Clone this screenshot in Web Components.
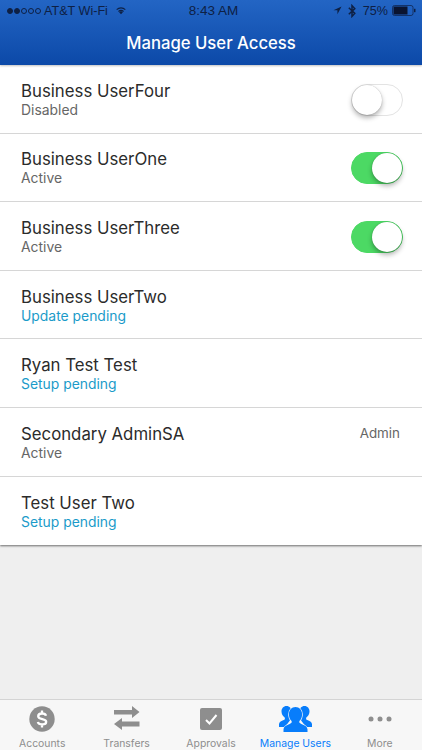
<!DOCTYPE html>
<html>
<head>
<meta charset="utf-8">
<title>Manage User Access</title>
<style>
  html, body { margin: 0; padding: 0; height: 100%; }
  body {
    width: 422px;
    height: 750px;
    overflow: hidden;
    display: flex;
    flex-direction: column;
    background: #efefef;
    font-family: "Inter", "Liberation Sans", sans-serif;
  }
  user-list { flex: 1; }
</style>
</head>
<body>
  <app-header title="Manage User Access"></app-header>
  <user-list>
    <user-row name="Business UserFour" status="Disabled" toggle="off"></user-row>
    <user-row name="Business UserOne" status="Active" toggle="on"></user-row>
    <user-row name="Business UserThree" status="Active" toggle="on"></user-row>
    <user-row name="Business UserTwo" status="Update pending" pending></user-row>
    <user-row name="Ryan Test Test" status="Setup pending" pending></user-row>
    <user-row name="Secondary AdminSA" status="Active" role="Admin"></user-row>
    <user-row name="Test User Two" status="Setup pending" pending last></user-row>
  </user-list>
  <tab-bar>
    <tab-item label="Accounts">
      <svg viewBox="0 0 26 26" width="26" height="26"><circle cx="13" cy="13" r="12.700" fill="#8e8e8e"/><path d="M17 9.800c-.4-1.500-1.900-2.300-4-2.300-2.300 0-3.800 1.100-3.800 2.800 0 3.700 8 2 8 5.500 0 1.700-1.700 2.700-4.100 2.700-2.300 0-3.800-.9-4.300-2.500M13 4.500v3M13 18.500v3" fill="none" stroke="#fff" stroke-width="2.300"/></svg>
    </tab-item>
    <tab-item label="Transfers">
      <svg viewBox="0 0 26 25" width="26" height="25"><path d="M0 4h18V0l7.500 6L18 12V8.500H0zM25.500 15.500H8V12L0 18l8 6v-3.500h17.500z" fill="#8e8e8e"/></svg>
    </tab-item>
    <tab-item label="Approvals">
      <svg viewBox="0 0 22 22" width="22" height="22"><rect width="22" height="22" rx="2" fill="#8e8e8e"/><path d="M6 12l3.500 3.500L16.500 7" fill="none" stroke="#fff" stroke-width="2"/></svg>
    </tab-item>
    <tab-item label="Manage Users" active>
      <svg viewBox="0 0 33 26" width="33" height="26"><path d="M7.500 0c3 0 5 2.400 5 5.500 0 2.300-.8 4.300-2.200 5.500-.4 1.100.1 1.700 1.500 2.200L6 21H0v-3c.4-2.300 2.400-3 4.700-3.900 1.100-.5 1.500-1.100 1-2.600C3.800 10.200 2.500 8 2.500 5.500 2.500 2.400 4.500 0 7.500 0zM25.500 0c-3 0-5 2.400-5 5.500 0 2.300.8 4.300 2.200 5.500.4 1.100-.1 1.700-1.500 2.200L27 21h6v-3c-.4-2.300-2.400-3-4.700-3.900-1.100-.5-1.500-1.100-1-2.600 1.900-1.300 3.200-3.500 3.200-6 0-3.100-2-5.500-5-5.500z" fill="#087dfb"/><path d="M16.500 1c3.900 0 6.600 3.200 6.600 7.200 0 2.900-1 5.300-2.700 6.900-.5 1.400.2 2.200 1.900 2.900 3.200 1.200 5.700 2.200 6.200 5.400V26H4.500v-2.600c.5-3.200 3-4.200 6.200-5.400 1.700-.7 2.400-1.500 1.900-2.900-1.700-1.600-2.700-4-2.700-6.900 0-4 2.700-7.200 6.600-7.200z" fill="#087dfb" stroke="#f7f7f7" stroke-width="1.400" paint-order="stroke"/></svg>
    </tab-item>
    <tab-item label="More">
      <svg viewBox="0 0 28 28" width="28" height="28"><circle cx="5" cy="14" r="2.500" fill="#8e8e8e"/><circle cx="14" cy="14" r="2.500" fill="#8e8e8e"/><circle cx="23" cy="14" r="2.500" fill="#8e8e8e"/></svg>
    </tab-item>
  </tab-bar>

<script>
class AppHeader extends HTMLElement {
  constructor() {
    super();
    this.shadowDOM = this.attachShadow({ mode: "open" });
  }
  connectedCallback() {
    const title = this.getAttribute("title");
    this.shadowDOM.innerHTML = `
    <style>
      :host {
        display: block;
        height: 65px;
        position: relative;
        background: linear-gradient(#2365c4, #0c49a8);
        box-shadow: 0 1px 2px rgba(0,0,0,.25);
        color: #fff;
      }
      .status {
        height: 21px;
        padding: 0 6px 0 7px;
        display: flex;
        align-items: center;
        justify-content: space-between;
        font-size: 12.600px;
        color: #0e2044;
        font-family: "Liberation Sans", sans-serif;
      }
      .side { flex: 1; display: flex; align-items: center; }
      .right { justify-content: flex-end; }
      .time { font-size: 13.500px; margin-left: 4px; }
      .dots { display: flex; gap: 1px; margin-right: 3px; }
      .dots i { width: 6px; height: 6px; border-radius: 50%; border: 1px solid #0e2044; box-sizing: border-box; }
      .dots i.on { background: #0e2044; }
      h1 {
        margin: 0;
        text-align: center;
        font-size: 16.700px;
        font-weight: 500;
        line-height: 44px;
      }
    </style>
    <div class="status">
      <div class="side">
        <span class="dots"><i class="on"></i><i class="on"></i><i></i><i></i><i></i></span>
        <span>AT&amp;T Wi-Fi</span>
        <svg viewBox="0 0 14 10" width="12" height="9" style="margin-left:7px"><path d="M7 9.500L4.800 7a3 3 0 0 1 4.400 0zM3.600 5.700a5 5 0 0 1 6.800 0l-.8 1a3.800 3.800 0 0 0-5.200 0zM1.500 3.500a8 8 0 0 1 11 0l-.9 1a6.600 6.600 0 0 0-9.200 0z" fill="#0e2044"/></svg>
      </div>
      <span class="time">8:43 AM</span>
      <div class="side right">
        <svg viewBox="0 0 10 10" width="9" height="9" style="margin-right:6px"><path d="M9.500.5L.5 4.800h4.400v4.400z" fill="#0e2044"/></svg>
        <svg viewBox="0 0 8 14" width="8" height="14" style="margin-right:7px"><path d="M.8 3.800l6 5.600L4 12.400V1.600l2.800 3L.8 10.200" fill="none" stroke="#0e2044" stroke-width="1.500"/></svg>
        <span>75%</span>
        <svg viewBox="0 0 24 11" width="24" height="11" style="margin-left:4px"><rect x=".5" y=".5" width="20.500" height="10" rx="2" fill="none" stroke="#0e2044" stroke-opacity=".7"/><rect x="1.500" y="1.500" width="14" height="8" fill="#0a1430"/><rect x="22" y="3.800" width="1.500" height="3.400" fill="#0e2044"/></svg>
      </div>
    </div>
    <h1>${title}</h1>
    `;
  }
}
customElements.define("app-header", AppHeader);

class UserList extends HTMLElement {
  constructor() {
    super();
    this.attachShadow({ mode: "open" }).innerHTML = `
    <style>
      :host { display: block; }
      .card { background: #fff; box-shadow: 0 1px 2px rgba(0,0,0,.55); }
    </style>
    <div class="card"><slot></slot></div>
    `;
  }
}
customElements.define("user-list", UserList);

class UserRow extends HTMLElement {
  constructor() {
    super();
    this.shadowDOM = this.attachShadow({ mode: "open" });
  }
  connectedCallback() {
    const toggle = this.getAttribute("toggle");
    const role = this.getAttribute("role");
    let side = "";
    if (toggle) side = `<toggle-switch ${toggle === "on" ? "checked" : ""}></toggle-switch>`;
    if (role) side = `<span class="role">${role}</span>`;
    this.shadowDOM.innerHTML = `
    <style>
      :host {
        display: flex;
        align-items: center;
        justify-content: space-between;
        box-sizing: border-box;
        height: 68.600px;
        padding: 2px 19px 0 21px;
        border-bottom: 1px solid #d6d6d6;
      }
      :host([last]) { border-bottom: none; }
      .name { font-size: 16.800px; line-height: 21px; color: #2b2b2b; }
      .status { font-size: 13.900px; line-height: 17px; color: #666; }
      :host([pending]) .status { color: #1b9bc9; }
      .role {
        align-self: flex-start;
        margin: 15px 3px 0 0;
        font-size: 13.400px;
        line-height: 17px;
        color: #666;
      }
    </style>
    <div>
      <div class="name">${this.getAttribute("name")}</div>
      <div class="status">${this.getAttribute("status")}</div>
    </div>
    ${side}
    `;
  }
}
customElements.define("user-row", UserRow);

class ToggleSwitch extends HTMLElement {
  constructor() {
    super();
    this.attachShadow({ mode: "open" }).innerHTML = `
    <style>
      :host {
        display: block;
        width: 52px;
        height: 32px;
        box-sizing: border-box;
        border-radius: 16px;
        border: 1px solid #e3e3e3;
        background: #fff;
        position: relative;
      }
      :host([checked]) { background: #4cd964; border-color: #4cd964; }
      .knob {
        position: absolute;
        left: 0;
        top: 0;
        width: 30px;
        height: 30px;
        border-radius: 50%;
        background: #fff;
        box-shadow: 0 3px 5px rgba(0,0,0,.3), 0 0 1px rgba(0,0,0,.3);
      }
      :host([checked]) .knob { left: 20px; }
    </style>
    <div class="knob"></div>
    `;
  }
}
customElements.define("toggle-switch", ToggleSwitch);

class TabBar extends HTMLElement {
  constructor() {
    super();
    this.attachShadow({ mode: "open" }).innerHTML = `
    <style>
      :host {
        display: flex;
        box-sizing: border-box;
        height: 51px;
        background: #f7f7f7;
        border-top: 1px solid #d4d4d4;
      }
    </style>
    <slot></slot>
    `;
  }
}
customElements.define("tab-bar", TabBar);

class TabItem extends HTMLElement {
  constructor() {
    super();
    this.attachShadow({ mode: "open" }).innerHTML = `
    <style>
      :host {
        flex: 1;
        display: flex;
        flex-direction: column;
        align-items: center;
        color: #8e8e8e;
        font-size: 10.400px;
      }
      :host([active]) { color: #087dfb; }
      .icon { height: 37px; display: flex; align-items: center; }
      .label { line-height: 13px; white-space: nowrap; }
    </style>
    <div class="icon"><slot></slot></div>
    <div class="label">${this.getAttribute("label")}</div>
    `;
  }
}
customElements.define("tab-item", TabItem);
</script>
</body>
</html>
